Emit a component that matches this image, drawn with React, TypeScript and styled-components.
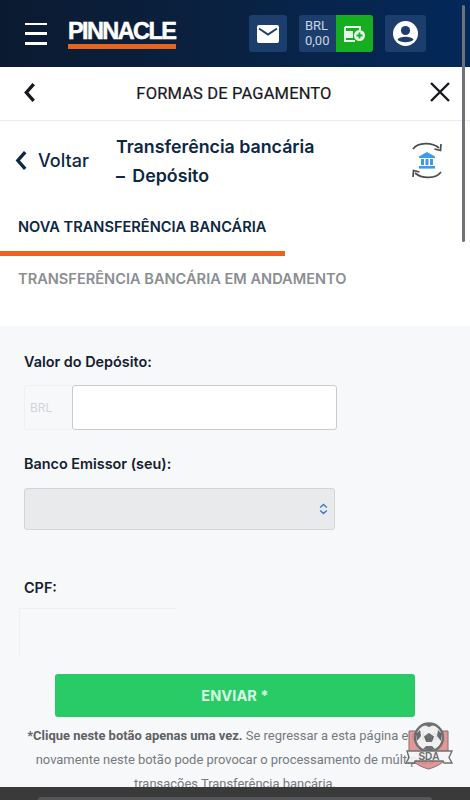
import { FC } from "react";
import styled, { createGlobalStyle } from "styled-components";

const Global = createGlobalStyle`
  html, body {
    margin: 0;
    padding: 0;
    height: 100%;
    overflow: hidden;
    background: #f6f8fa;
  }
  * { box-sizing: border-box; }
`;

const Page = styled.div`
  position: relative;
  width: 470px;
  height: 800px;
  overflow: hidden;
  font-family: Inter, "Liberation Sans", sans-serif;
  background: #f6f8fa;
`;

const Header = styled.header`
  height: 67px;
  display: flex;
  align-items: center;
  padding-left: 25px;
  background: linear-gradient(90deg, #0b1a30 0%, #0a2140 45%, #03295a 100%);
`;

const Burger = styled.div`
  width: 22px;
  height: 22px;
  display: flex;
  flex-direction: column;
  justify-content: space-between;
  margin-right: 21px;

  & > span {
    height: 2.5px;
    background: #fff;
  }
`;

const Logo = styled.div`
  width: 108px;
  margin-right: 73px;
  display: flex;
  flex-direction: column;
  margin-top: 1px;
`;

const LogoText = styled.div`
  font-family: "Liberation Sans", Arial, sans-serif;
  font-weight: 700;
  font-size: 23.5px;
  line-height: 24px;
  letter-spacing: -1.6px;
  color: #fff;
  white-space: nowrap;
  -webkit-text-stroke: 0.5px #fff;
`;

const LogoBar = styled.div`
  height: 5px;
  margin-top: 1px;
  background: #e8641c;
`;

const IconTile = styled.div<{ $w: number }>`
  width: ${(p) => p.$w}px;
  height: 37px;
  border-radius: 3px;
  background: #1c3e6d;
  display: flex;
  align-items: center;
  justify-content: center;
`;

const Balance = styled.div`
  width: 74px;
  height: 37px;
  margin: 0 12px;
  display: flex;
  border-radius: 3px;
  overflow: hidden;
  background: #1c3e6d;
`;

const BalanceText = styled.div`
  width: 37px;
  padding: 3px 0 0 6px;
  font-family: Roboto, sans-serif;
  font-size: 13px;
  line-height: 15px;
  color: #c9d5e6;
`;

const BalanceAdd = styled.div`
  width: 37px;
  display: flex;
  align-items: center;
  justify-content: center;
  background: #17ad20;
`;

const TitleBar = styled.div`
  height: 54px;
  display: flex;
  align-items: center;
  justify-content: space-between;
  padding: 0 20px 3px 23px;
  background: #fff;
  border-bottom: 1px solid #ececec;
`;

const TitleText = styled.div`
  font-family: Roboto, sans-serif;
  font-size: 16.5px;
  font-weight: 400;
  letter-spacing: 0.15px;
  color: #16191d;
  -webkit-text-stroke: 0.2px #16191d;
  margin-left: 2px;
  padding-top: 2px;
`;

const Intro = styled.div`
  background: #fff;
  height: 205px;
`;

const SubHeader = styled.div`
  height: 79px;
  display: flex;
  align-items: center;
  padding: 0 28px 0 14px;
`;

const BackLink = styled.div`
  width: 102px;
  display: flex;
  align-items: center;
  gap: 10px;
  font-size: 18px;
  font-weight: 500;
  color: #0d2744;
`;

const PayTitle = styled.div`
  flex: 1;
  padding-top: 1px;
  font-size: 17.8px;
  font-weight: 600;
  line-height: 29.5px;
  color: #0d2744;
`;

const Dash = styled.span`
  margin-right: 3px;
`;

const Tab = styled.div<{ $active?: boolean }>`
  height: ${(p) => (p.$active ? 56 : 46)}px;
  width: ${(p) => (p.$active ? 285 : 470)}px;
  padding: ${(p) => (p.$active ? "17px" : "13px")} 0 0 18px;
  font-size: 14.6px;
  font-weight: 600;
  line-height: 20px;
  white-space: nowrap;
  color: ${(p) => (p.$active ? "#0d2744" : "#8b8e93")};
  border-bottom: ${(p) => (p.$active ? "5px solid #e8641c" : "none")};
`;

const Form = styled.div`
  padding: 26px 0 0 24px;
`;

const Label = styled.div<{ $top?: number }>`
  margin-top: ${(p) => p.$top ?? 0}px;
  font-size: 14.4px;
  font-weight: 600;
  line-height: 20px;
  color: #14202e;
`;

const AmountRow = styled.div`
  display: flex;
  height: 45px;
  margin-top: 13px;
`;

const Prefix = styled.div`
  width: 48px;
  padding-left: 5px;
  display: flex;
  align-items: center;
  font-size: 12px;
  color: #d2d5d8;
  background: #f7f8fa;
  border: 1px solid #eff0f2;
  border-right: none;
  border-radius: 3px 0 0 3px;
`;

const AmountInput = styled.div`
  width: 265px;
  background: #fff;
  border: 1px solid #c9cbcf;
  border-radius: 3px;
`;

const BankSelect = styled.div`
  width: 311px;
  height: 42px;
  margin-top: 14px;
  padding-right: 6px;
  display: flex;
  align-items: center;
  justify-content: flex-end;
  background: #e9eaec;
  border: 1px solid #d2d4d7;
  border-radius: 3px;
`;

const CpfFrame = styled.div`
  width: 158px;
  height: 49px;
  margin: 10px 0 0 -5px;
  border-top: 1px solid #eff0f2;
  border-left: 1px solid #eff0f2;
`;

const SendButton = styled.div`
  width: 360px;
  height: 43px;
  margin: 17px 0 0 31px;
  display: flex;
  align-items: center;
  justify-content: center;
  font-size: 14.5px;
  font-weight: 700;
  letter-spacing: 0.1px;
  color: #d8f7e3;
  background: #29cb66;
  border-radius: 3px;
`;

const Note = styled.p`
  width: 440px;
  margin: 7px 0 0 -9px;
  font-family: Roboto, sans-serif;
  font-size: 12.95px;
  line-height: 24px;
  text-align: center;
  color: #77797d;

  & > strong {
    font-weight: 700;
    color: #5f6165;
  }
`;

const Scrollbar = styled.div`
  position: absolute;
  top: 5px;
  right: 5px;
  width: 3px;
  height: 237px;
  border-radius: 2px;
  background: #6f7276;
`;

const Watermark = styled.svg`
  position: absolute;
  left: 403px;
  top: 722px;
  opacity: 0.88;
`;

const SystemBar = styled.div`
  position: absolute;
  left: 0;
  right: 0;
  bottom: 0;
  height: 13px;
  padding: 10px 38px 0;
  background: #3a3a3b;
`;

const SystemPill = styled.div`
  height: 3px;
  border-radius: 3px 3px 0 0;
  background: #55575a;
`;

const Chevron: FC<{ w: number; h: number; color: string; sw: number }> = ({ w, h, color, sw }) => (
  <svg width={w} height={h} viewBox="0 0 12 20">
    <path d="M10 2 L3 10 L10 18" fill="none" stroke={color} strokeWidth={sw} />
  </svg>
);

const App: FC = () => (
  <Page>
    <Global />
    <Header>
      <Burger>
        <span />
        <span />
        <span />
      </Burger>
      <Logo>
        <LogoText>PINNACLE</LogoText>
        <LogoBar />
      </Logo>
      <IconTile $w={38}>
        <svg width="22" height="18" viewBox="0 0 22 18">
          <rect x="0" y="0" width="22" height="18" rx="2" fill="#fff" />
          <path d="M2 3.5 L11 9.5 L20 3.5" fill="none" stroke="#1c3e6d" strokeWidth="2" />
        </svg>
      </IconTile>
      <Balance>
        <BalanceText>
          BRL
          <br />
          0,00
        </BalanceText>
        <BalanceAdd>
          <svg width="22" height="16" viewBox="0 0 22 16">
            <path d="M1 1 H16 V4 M1 1 V15 H11 M1 6 H9 M1 11 H9" fill="none" stroke="#e8f8e8" strokeWidth="2" />
            <rect x="2" y="7" width="7" height="3" fill="#e8f8e8" />
            <circle cx="15.5" cy="9.5" r="5.5" fill="#e8f8e8" />
            <path d="M15.5 6.5 V12.5 M12.5 9.5 H18.5" stroke="#17ad20" strokeWidth="1.8" />
          </svg>
        </BalanceAdd>
      </Balance>
      <IconTile $w={41}>
        <svg width="25" height="25" viewBox="0 0 25 25">
          <circle cx="12.5" cy="12.5" r="12.5" fill="#fff" />
          <circle cx="12.5" cy="9.5" r="4.6" fill="#1c3e6d" />
          <path d="M4.5 18.5 C6.5 14.8 18.5 14.8 20.5 18.5 C18 22 7 22 4.5 18.5 Z" fill="#1c3e6d" />
        </svg>
      </IconTile>
    </Header>
    <TitleBar>
      <Chevron w={13} h={21} color="#16191d" sw={3.2} />
      <TitleText>FORMAS DE PAGAMENTO</TitleText>
      <svg width="20" height="20" viewBox="0 0 20 20">
        <path d="M1 1 L19 19 M19 1 L1 19" stroke="#16191d" strokeWidth="2.4" />
      </svg>
    </TitleBar>
    <Intro>
      <SubHeader>
        <BackLink>
          <Chevron w={14} h={21} color="#0d2744" sw={3.2} />
          Voltar
        </BackLink>
        <PayTitle>
          Transferência bancária
          <br />
          <Dash>–</Dash> Depósito
        </PayTitle>
        <svg width="30" height="38" viewBox="0 0 30 38">
          <path d="M1 7 C6 0 20 0 27 6" fill="none" stroke="#4a4c50" strokeWidth="1.7" />
          <path d="M29 2 L28.5 8.5 L22.5 7" fill="none" stroke="#4a4c50" strokeWidth="1.7" />
          <path d="M29 30 C24 37 10 37 3 31" fill="none" stroke="#4a4c50" strokeWidth="1.7" />
          <path d="M1 35 L1.5 28.5 L7.5 30" fill="none" stroke="#4a4c50" strokeWidth="1.7" />
          <path d="M15 10 L23 14.5 V16 H7 V14.5 Z" fill="#3d9be9" />
          <path d="M9 17 H12 V23 H9 Z M13.5 17 H16.5 V23 H13.5 Z M18 17 H21 V23 H18 Z" fill="#3d9be9" />
          <rect x="7" y="24" width="16" height="2.6" fill="#3d9be9" />
        </svg>
      </SubHeader>
      <Tab $active>NOVA TRANSFERÊNCIA BANCÁRIA</Tab>
      <Tab>TRANSFERÊNCIA BANCÁRIA EM ANDAMENTO</Tab>
    </Intro>
    <Form>
      <Label>Valor do Depósito:</Label>
      <AmountRow>
        <Prefix>BRL</Prefix>
        <AmountInput />
      </AmountRow>
      <Label $top={24}>Banco Emissor (seu):</Label>
      <BankSelect>
        <svg width="9" height="12" viewBox="0 0 9 12">
          <path d="M1.2 4.5 L4.5 1.5 L7.8 4.5 M1.2 7.5 L4.5 10.5 L7.8 7.5" fill="none" stroke="#3a80cc" strokeWidth="1.6" />
        </svg>
      </BankSelect>
      <Label $top={48}>CPF:</Label>
      <CpfFrame />
      <SendButton>ENVIAR *</SendButton>
      <Note>
        <strong>*Clique neste botão apenas uma vez.</strong> Se regressar a esta página e clicar novamente neste botão
        pode provocar o processamento de múltiplas transações Transferência bancária.
      </Note>
    </Form>
    <Scrollbar />
    <Watermark width="52" height="50" viewBox="0 0 52 50">
      <path d="M6 9 H45 V34 C41 41 33 45 25.5 47 C18 45 10 41 6 34 Z" fill="#e08a8a" stroke="#7d5a5a" strokeWidth="1" />
      <circle cx="26" cy="15.5" r="14" fill="#f0f0f0" stroke="#5c5f62" strokeWidth="2.4" />
      <path d="M26 11 L31 14.5 L29 20 H23 L21 14.5 Z" fill="#5c5f62" />
      <path d="M20 2.5 L26 5 L32 2.5 L30 1 H22 Z M13 12 L17 8 L18 14 L14 19 Z M39 12 L35 8 L34 14 L38 19 Z M20 27 L23 24 H29 L32 27 L26 29 Z" fill="#5c5f62" />
      <path d="M4 29 H49 L46 35.5 L49 41 H41 L40 39 H12 L11 41 H3 L6 35.5 Z" fill="#f5f5f5" stroke="#5c5f62" strokeWidth="1.4" />
      <text x="26" y="38" textAnchor="middle" fontFamily="Liberation Sans, sans-serif" fontWeight="700" fontSize="10" fill="#5c5f62">
        SDA
      </text>
    </Watermark>
    <SystemBar>
      <SystemPill />
    </SystemBar>
  </Page>
);

export default App;
